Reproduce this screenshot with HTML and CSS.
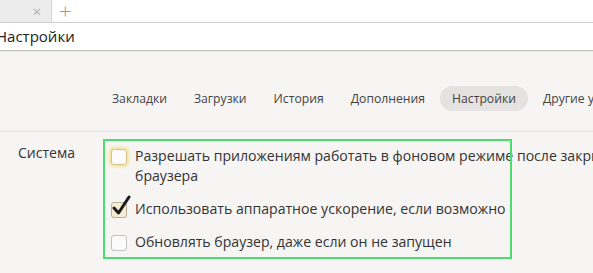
FILE: index.html
```html
<!DOCTYPE html>
<html lang="ru">
<head>
  <meta charset="UTF-8">
  <title>Настройки</title>
  <link rel="stylesheet" href="styles.css">
</head>
<body>
  <div class="tabs">
    <div class="tab">
      <span class="tab-close">&times;</span>
    </div>
    <div class="tab-new">+</div>
  </div>
  <div class="address">Настройки</div>
  <div class="page">
    <div class="nav">
      <span class="nav-item">Закладки</span>
      <span class="nav-item">Загрузки</span>
      <span class="nav-item">История</span>
      <span class="nav-item">Дополнения</span>
      <span class="nav-item active">Настройки</span>
      <span class="nav-item">Другие устройства</span>
    </div>
    <div class="section">
      <div class="section-title">Система</div>
      <div class="options">
        <label class="option">
          <span class="check focused"></span>
          <span class="option-text wide">Разрешать приложениям работать в фоновом режиме после закрытия браузера</span>
        </label>
        <label class="option">
          <span class="check checked">
            <svg width="20" height="22" viewBox="0 0 20 22"><path d="M3 13 L7.5 18 L18 2" fill="none" stroke="#1a1a1a" stroke-width="3" stroke-linecap="round" stroke-linejoin="round"/></svg>
          </span>
          <span class="option-text">Использовать аппаратное ускорение, если возможно</span>
        </label>
        <label class="option">
          <span class="check"></span>
          <span class="option-text">Обновлять браузер, даже если он не запущен</span>
        </label>
        <div class="highlight"></div>
      </div>
    </div>
  </div>
</body>
</html>
```

FILE: styles.css
```css
body {
    margin: 0;
    padding: 0;
    width: 593px;
    height: 273px;
    overflow: hidden;
    font-family: 'Open Sans', 'Noto Sans', sans-serif;
    background: #f6f5f4;
    color: #333;
}
.tabs {
    display: flex;
    height: 22px;
    background: #fff;
    border-bottom: 1px solid #cfcfcf;
}
.tab {
    width: 52px;
    background: #ececec;
    border-right: 1px solid #d4d4d4;
    display: flex;
    justify-content: flex-end;
    align-items: center;
    padding-right: 10px;
    box-sizing: border-box;
}
.tab-close {
    color: #b0b0b0;
    font-size: 15px;
    line-height: 1;
}
.tab-new {
    color: #999;
    font-size: 22px;
    font-weight: 300;
    line-height: 20px;
    padding-left: 7px;
}
.address {
    height: 27px;
    background: #fff;
    border-bottom: 1px solid #c4c4c4;
    font-size: 15px;
    line-height: 27px;
    color: #222;
    margin-left: -4px;
}
.page {
    border-top: 1px solid #e6e6e6;
}
.nav {
    display: flex;
    align-items: center;
    gap: 3px;
    padding: 34px 0 0 100px;
    height: 25px;
    white-space: nowrap;
    font-size: 12.2px;
    color: #444;
}
.nav-item {
    padding: 0 12px;
    line-height: 25px;
    border-radius: 13px;
}
.nav-item.active {
    background: #e5e3e1;
}
.section {
    margin-top: 20px;
    border-top: 1px solid #ebdfdf;
    display: flex;
    padding-top: 14px;
}
.section-title {
    flex-shrink: 0;
    width: 111px;
    padding-left: 18px;
    box-sizing: border-box;
    font-size: 14px;
    line-height: 20px;
    margin-top: -3px;
}
.options {
    position: relative;
    display: flex;
    flex-direction: column;
    gap: 13px;
}
.option {
    display: flex;
    align-items: flex-start;
    gap: 8px;
    font-size: 14.1px;
    line-height: 20px;
    white-space: nowrap;
}
.option-text.wide {
    white-space: normal;
    width: 500px;
}
.check {
    position: relative;
    flex-shrink: 0;
    width: 14px;
    height: 14px;
    margin-top: 3px;
    border: 1px solid #c2c2c2;
    border-radius: 3px;
    background: #fbfbfb;
}
.check.focused {
    border-color: #d8c48a;
    box-shadow: 0 0 3px 2px #f7e39a;
}
.check.checked {
    background: #f6edd2;
    border-color: #b9b09a;
}
.check svg {
    position: absolute;
    left: -1px;
    top: -8px;
}
.highlight {
    position: absolute;
    left: -8px;
    top: -7px;
    width: 409px;
    height: 120px;
    box-sizing: border-box;
    border: 2px solid #4cdd6e;
    pointer-events: none;
}
```
